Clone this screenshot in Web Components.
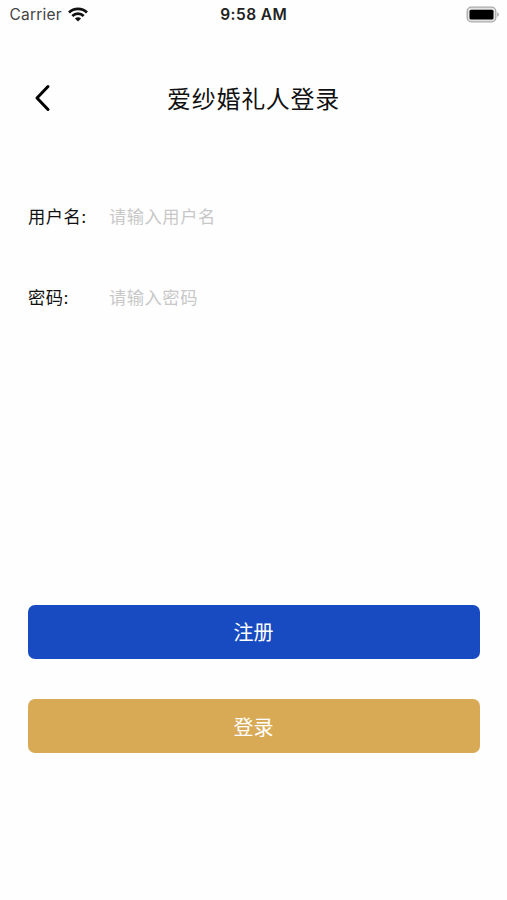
<!DOCTYPE html>
<html lang="zh-CN">
<head>
<meta charset="UTF-8">
<meta name="viewport" content="width=device-width, initial-scale=1.0">
<title>爱纱婚礼人登录</title>
<style>
    body {
        margin: 0;
        background: #fefefe;
        color: #111;
        font-family: Inter, "Noto Sans CJK SC", sans-serif;
    }
</style>
</head>
<body>
<login-page>
    <status-bar slot="status" carrier="Carrier" time="9:58 AM"></status-bar>
    <nav-header slot="header">爱纱婚礼人登录</nav-header>
    <form-field label="用户名:" name="username" placeholder="请输入用户名"></form-field>
    <form-field label="密码:" name="password" type="password" placeholder="请输入密码"></form-field>
    <action-button slot="actions" color="#184bc1">注册</action-button>
    <action-button slot="actions" color="#d9aa55">登录</action-button>
</login-page>

<script>
class LoginPage extends HTMLElement {
    constructor() {
        super();
        this.attachShadow({ mode: 'open' });
        this.shadowRoot.innerHTML = `
            <style>
                :host {
                    display: flex;
                    flex-direction: column;
                    height: 900px;
                    overflow: hidden;
                }
                .fields {
                    display: grid;
                    gap: 41px;
                    padding: 60px 27px 0 28px;
                }
                .actions {
                    display: grid;
                    gap: 40.5px;
                    margin-top: auto;
                    padding: 0 27px 147px 28px;
                }
            </style>
            <slot name="status"></slot>
            <slot name="header"></slot>
            <div class="fields"><slot></slot></div>
            <div class="actions"><slot name="actions"></slot></div>
        `;
    }
}

class StatusBar extends HTMLElement {
    constructor() {
        super();
        this.attachShadow({ mode: 'open' });

        const carrier = this.getAttribute('carrier');
        const time = this.getAttribute('time');

        this.shadowRoot.innerHTML = `
            <style>
                :host {
                    display: grid;
                    grid-template-columns: 1fr auto 1fr;
                    align-items: center;
                    height: 29px;
                    padding: 0 7px 0 9.5px;
                    box-sizing: border-box;
                    color: #222;
                }
                .left {
                    display: flex;
                    align-items: center;
                    gap: 6px;
                }
                .carrier {
                    font-size: 15.5px;
                    letter-spacing: 0.2px;
                    color: #444;
                }
                .time {
                    font-weight: 600;
                    font-size: 15.5px;
                    letter-spacing: 0.45px;
                    padding-right: 2px;
                }
                .battery {
                    justify-self: end;
                }
                svg {
                    display: block;
                }
            </style>
            <div class="left">
                <span class="carrier">${carrier}</span>
                <svg width="20" height="15" viewBox="0 0 20 15" fill="none" stroke="#111" stroke-width="2.7">
                    <path d="M1 5.5C6 .6 14 .6 19 5.5"/>
                    <path d="M4.3 9C7.5 5.9 12.5 5.9 15.7 9"/>
                    <path d="M10 14.4L6.9 11.4C8.6 9.8 11.4 9.8 13.1 11.4Z" fill="#111" stroke="none"/>
                </svg>
            </div>
            <span class="time">${time}</span>
            <svg class="battery" width="34" height="17" viewBox="0 0 34 17">
                <rect x="1.2" y="1.2" width="28.6" height="14.6" rx="4" fill="#e3e3e3" stroke="#aaa" stroke-width="1.3"/>
                <rect x="3.5" y="3.7" width="24" height="9.8" rx="1.5" fill="#000"/>
                <path d="M31.2 6.2C33.4 7 33.4 10 31.2 10.8Z" fill="#aaa"/>
            </svg>
        `;
    }
}

class NavHeader extends HTMLElement {
    constructor() {
        super();
        this.attachShadow({ mode: 'open' });
        this.shadowRoot.innerHTML = `
            <style>
                :host {
                    display: grid;
                    grid-template-columns: 30px 1fr 30px;
                    align-items: center;
                    height: 76px;
                    margin-top: 31px;
                    padding: 0 28px;
                }
                button {
                    padding: 0;
                    border: none;
                    background: none;
                }
                svg {
                    display: block;
                }
                h1 {
                    margin: 0;
                    padding-top: 3px;
                    text-align: center;
                    font-size: 24px;
                    font-weight: 400;
                    letter-spacing: 0.7px;
                    line-height: 36px;
                }
            </style>
            <button type="button" aria-label="返回">
                <svg width="30" height="30" viewBox="0 0 30 30" fill="none" stroke="#000" stroke-width="3" stroke-linecap="round" stroke-linejoin="round">
                    <path d="M20 3.5L9 15L20 26.5"/>
                </svg>
            </button>
            <h1><slot></slot></h1>
        `;
    }
}

class FormField extends HTMLElement {
    constructor() {
        super();
        this.attachShadow({ mode: 'open' });

        const label = this.getAttribute('label');
        const name = this.getAttribute('name');
        const type = this.getAttribute('type') || 'text';
        const placeholder = this.getAttribute('placeholder');

        this.shadowRoot.innerHTML = `
            <style>
                :host {
                    display: grid;
                    grid-template-columns: 81px 1fr;
                    align-items: center;
                    height: 40px;
                    font-size: 17.3px;
                    letter-spacing: 0.5px;
                }
                label {
                    padding-bottom: 2px;
                }
                input {
                    width: 100%;
                    height: 40px;
                    padding: 0;
                    border: none;
                    outline: none;
                    background: none;
                    box-sizing: border-box;
                    font: inherit;
                    letter-spacing: inherit;
                    color: inherit;
                }
                input::placeholder {
                    color: #c8c8c8;
                    opacity: 1;
                }
            </style>
            <label for="${name}">${label}</label>
            <input id="${name}" name="${name}" type="${type}" placeholder="${placeholder}">
        `;
    }
}

class ActionButton extends HTMLElement {
    constructor() {
        super();
        this.attachShadow({ mode: 'open' });

        const color = this.getAttribute('color');

        this.shadowRoot.innerHTML = `
            <style>
                :host {
                    display: block;
                }
                button {
                    display: block;
                    width: 100%;
                    height: 54px;
                    padding: 0 1px 0 0;
                    border: none;
                    border-radius: 7px;
                    background: ${color};
                    color: #fff;
                    font: inherit;
                    font-size: 20px;
                }
            </style>
            <button type="button"><slot></slot></button>
        `;
    }
}

customElements.define('login-page', LoginPage);
customElements.define('status-bar', StatusBar);
customElements.define('nav-header', NavHeader);
customElements.define('form-field', FormField);
customElements.define('action-button', ActionButton);
</script>
</body>
</html>
